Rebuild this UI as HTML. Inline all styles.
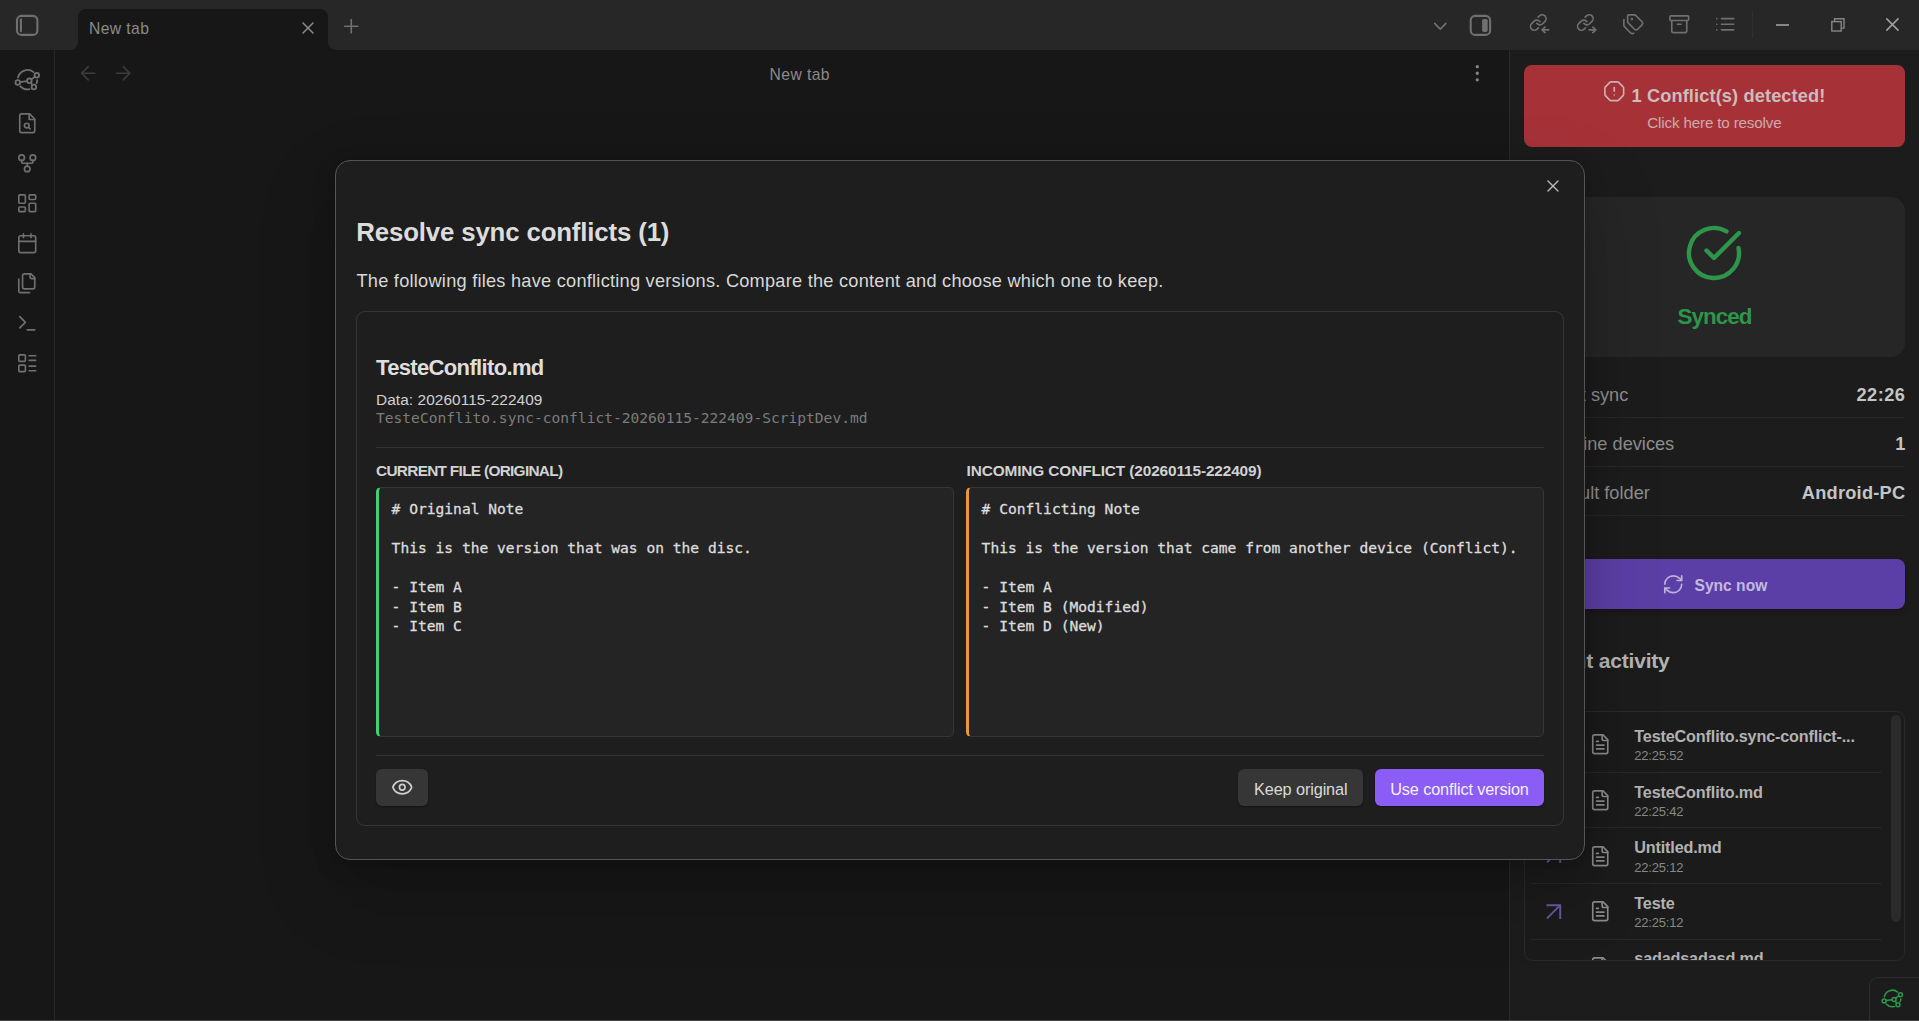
<!DOCTYPE html>
<html lang="en">
<head>
<meta charset="utf-8">
<title>Resolve sync conflicts</title>
<style>
*{box-sizing:border-box;margin:0;padding:0}
html,body{width:1919px;height:1021px;overflow:hidden;background:#171717}
body{position:relative;font-family:"Liberation Sans",sans-serif;color:#878787}
.abs{position:absolute}
.t{position:absolute;white-space:nowrap;line-height:1}
svg{position:absolute;overflow:visible}
.ic{fill:none;stroke:#707070;stroke-width:1.75;stroke-linecap:round;stroke-linejoin:round}
.mono{font-family:"DejaVu Sans Mono","Liberation Mono",monospace}
#titlebar{left:0;top:0;width:1919px;height:50px;background:#272727}
#tab{left:78px;top:9px;width:250px;height:41px;background:#171717;border-radius:8px 8px 0 0}
.curve{width:8px;height:8px;top:42px;background:#171717}
.curve i{position:absolute;left:0;top:0;width:8px;height:8px;background:#272727}
#ribbonline{left:54px;top:50px;width:1px;height:970px;background:#272727}
#rightbg{left:1509px;top:50px;width:410px;height:970px;background:#1c1c1c;border-left:1px solid #2a2a2a}
#bottomline{left:0;top:1020px;width:1919px;height:1px;background:#454545}
#banner{left:1524px;top:65px;width:381px;height:82px;background:#a63238;border-radius:8px}
#synccard{left:1524px;top:197px;width:381px;height:160px;background:#262626;border-radius:14px}
.row{left:1524px;width:381px;height:1px;background:#272727}
#syncbtn{left:1524px;top:559px;width:381px;height:50px;background:#5c3fa6;border-radius:8px;box-shadow:0 2px 5px rgba(0,0,0,.3)}
#actlist{left:1524px;top:711px;width:381px;height:250px;border:1px solid #2a2a2a;border-radius:9px;overflow:hidden;background:#1b1b1b}
#actlist .sep{position:absolute;left:6px;width:351px;height:1px;background:#272727}
#scroll{left:1891px;top:715px;width:10px;height:207px;border-radius:5px;background:#2a2a2a}
#status{left:1869px;top:977px;width:60px;height:50px;border:1px solid #2d2d2d;border-radius:9px 0 0 0;background:#1c1c1c}
#modal{left:335px;top:160px;width:1250px;height:700px;background:#1e1e1e;border:1px solid #555;border-radius:15px;
 box-shadow:0 2px 8px rgba(0,0,0,.07),0 7px 26px rgba(0,0,0,.11),0 30px 80px rgba(0,0,0,.2)}
#card{left:356px;top:311px;width:1208px;height:515px;border:1px solid #363636;border-radius:9px}
.hr{height:1px;background:#343434;left:376px;width:1168px}
.code{top:487px;width:578px;height:250px;background:#242424;border:1px solid #363636;border-left:3px solid #45d16f;border-radius:5px;overflow:hidden}
.code pre{position:absolute;left:12.6px;top:11.2px;font-family:"DejaVu Sans Mono","Liberation Mono",monospace;font-size:14.6px;line-height:19.5px;color:#dcdcdc;-webkit-text-stroke:0.3px #dcdcdc}
.btn{top:769px;height:37px;border-radius:6px;box-shadow:0 1px 2px rgba(0,0,0,.35)}
</style>
</head>
<body>
<div id="titlebar" class="abs"></div>
<div id="tab" class="abs"></div>
<div class="abs curve" style="left:70px"><i style="border-radius:0 0 8px 0"></i></div>
<div class="abs curve" style="left:328px"><i style="border-radius:0 0 0 8px"></i></div>
<svg class="ic" viewBox="0 0 40 40" style="left:7px;top:5px;width:40px;height:40px;stroke-width:2.1"><rect x="10" y="10.9" width="20.4" height="19" rx="4.5"/><path d="M13.9 14.5v11.8"/></svg>
<div class="t" style="top:21.01px;font-size:15.7px;color:#8a8a8a;left:89.00px;letter-spacing:0.4px;">New tab</div>
<svg class="ic" viewBox="0 0 24 24" style="left:297.80px;top:18.10px;width:20px;height:20px;stroke:#8c8c8c;stroke-width:1.75;"><path d="M18 6 6 18"/><path d="m6 6 12 12"/></svg>
<svg class="ic" viewBox="0 0 24 24" style="left:339.75px;top:15.05px;width:22.5px;height:22.5px;stroke:#707070;stroke-width:1.75;"><path d="M5 12h14"/><path d="M12 5v14"/></svg>
<svg class="ic" viewBox="0 0 24 24" style="left:1429.15px;top:14.95px;width:22.5px;height:22.5px;stroke:#707070;stroke-width:1.75;"><path d="m6 9 6 6 6-6"/></svg>
<svg class="ic" viewBox="0 0 40 40" style="left:1460px;top:5px;width:40px;height:40px;stroke-width:2.1"><rect x="10.7" y="10.9" width="19.4" height="19" rx="4.5"/><rect x="22.1" y="13.9" width="5.6" height="13" rx="1.6" fill="#707070" stroke="none"/></svg>
<svg class="ic" viewBox="0 0 24 24" style="left:1530.15px;top:12.95px;width:22.5px;height:22.5px;stroke:#707070;stroke-width:1.75;"><g transform="translate(0.5 1.8) scale(0.835) translate(-2 -2)" stroke-width="2.1"><path d="M10 13a5 5 0 0 0 7.54.54l3-3a5 5 0 0 0-7.07-7.07l-1.72 1.71"/><path d="M14 11a5 5 0 0 0-7.54-.54l-3 3a5 5 0 0 0 7.07 7.07l1.71-1.71"/></g><path d="M20 18h-7"/><path d="m16 21-3-3 3-3"/></svg>
<svg class="ic" viewBox="0 0 24 24" style="left:1576.15px;top:12.95px;width:22.5px;height:22.5px;stroke:#707070;stroke-width:1.75;"><g transform="translate(1.6 1.8) scale(0.835) translate(-2 -2)" stroke-width="2.1"><path d="M10 13a5 5 0 0 0 7.54.54l3-3a5 5 0 0 0-7.07-7.07l-1.72 1.71"/><path d="M14 11a5 5 0 0 0-7.54-.54l-3 3a5 5 0 0 0 7.07 7.07l1.71-1.71"/></g><path d="M14 18h7"/><path d="m18 15 3 3-3 3"/></svg>
<svg class="ic" viewBox="0 0 24 24" style="left:1622.15px;top:12.95px;width:22.5px;height:22.5px;stroke:#707070;stroke-width:1.75;"><path d="M13.172 2a2 2 0 0 1 1.414.586l6.71 6.71a2.4 2.4 0 0 1 0 3.408l-4.592 4.592a2.4 2.4 0 0 1-3.408 0l-6.71-6.71A2 2 0 0 1 6 9.172V3a1 1 0 0 1 1-1z"/><path d="M2 7v6.172a2 2 0 0 0 .586 1.414l6.71 6.71a2.4 2.4 0 0 0 3.191.193"/><circle cx="10.5" cy="6.5" r=".5" fill="#707070"/></svg>
<svg class="ic" viewBox="0 0 24 24" style="left:1668.15px;top:12.95px;width:22.5px;height:22.5px;stroke:#707070;stroke-width:1.75;"><rect width="20" height="5" x="2" y="3" rx="1"/><path d="M4 8v11a2 2 0 0 0 2 2h12a2 2 0 0 0 2-2V8"/><path d="M10 12h4"/></svg>
<svg class="ic" viewBox="0 0 24 24" style="left:1714.15px;top:12.95px;width:22.5px;height:22.5px;stroke:#707070;stroke-width:1.75;"><path d="M3 12h.01"/><path d="M3 18h.01"/><path d="M3 6h.01"/><path d="M8 12h13"/><path d="M8 18h13"/><path d="M8 6h13"/></svg>
<div class="abs" style="left:1752px;top:11px;width:1px;height:27px;background:#313131"></div>
<svg viewBox="0 0 60 50" style="left:1752px;top:0;width:60px;height:50px"><path d="M24 25h13" stroke="#8c8c8c" stroke-width="1.9" fill="none"/></svg>
<svg viewBox="0 0 60 50" style="left:1807px;top:0;width:60px;height:50px" fill="none" stroke="#868686" stroke-width="1.4"><path d="M27.6 21V18.7h9.4v9.4h-2.3"/><rect x="24.8" y="21.6" width="9.4" height="9.4"/></svg>
<svg viewBox="0 0 60 50" style="left:1862px;top:0;width:60px;height:50px" fill="none" stroke="#a0a0a0" stroke-width="1.5"><path d="M24.3 18.4 36.5 30.6M36.5 18.4 24.3 30.6"/></svg>
<div id="ribbonline" class="abs"></div>
<svg class="ic" viewBox="0 0 60 120" style="left:0;top:0;width:60px;height:120px;stroke-width:1.8"><path d="M18.01 77.68A9.7 9.7 0 0 1 33.60 72.16"/><path d="M37.19 80.21A9.7 9.7 0 0 1 36.56 83.18"/><path d="M29.68 89.15A9.7 9.7 0 0 1 20.41 86.32"/><path d="M20.17 82.15L27.03 81.15"/><path d="M31.33 79.37L34.87 76.73"/><path d="M30.81 82.74L32.49 85.06"/><circle cx="17.8" cy="82.5" r="2.3"/><circle cx="29.4" cy="80.8" r="2.3"/><circle cx="36.8" cy="75.3" r="2.3"/><circle cx="33.9" cy="87.0" r="2.3"/></svg>
<svg class="ic" viewBox="0 0 24 24" style="left:16.05px;top:112.05px;width:22.5px;height:22.5px;stroke:#707070;stroke-width:1.75;"><path d="M14.5 2H6a2 2 0 0 0-2 2v16a2 2 0 0 0 2 2h12a2 2 0 0 0 2-2V7.5L14.5 2z"/><polyline points="14 2 14 8 20 8"/><circle cx="11.5" cy="14.5" r="2.5"/><path d="M13.25 16.25 15 18"/></svg>
<svg class="ic" viewBox="0 0 24 24" style="left:16.05px;top:152.05px;width:22.5px;height:22.5px;stroke:#707070;stroke-width:1.75;"><circle cx="12" cy="18" r="3"/><circle cx="6" cy="6" r="3"/><circle cx="18" cy="6" r="3"/><path d="M18 9v2c0 .6-.4 1-1 1H7c-.6 0-1-.4-1-1V9"/><path d="M12 12v3"/></svg>
<svg class="ic" viewBox="0 0 24 24" style="left:16.05px;top:192.05px;width:22.5px;height:22.5px;stroke:#707070;stroke-width:1.75;"><rect width="7" height="9" x="3" y="3" rx="1"/><rect width="7" height="5" x="14" y="3" rx="1"/><rect width="7" height="9" x="14" y="12" rx="1"/><rect width="7" height="5" x="3" y="16" rx="1"/></svg>
<svg class="ic" viewBox="0 0 24 24" style="left:16.05px;top:232.05px;width:22.5px;height:22.5px;stroke:#707070;stroke-width:1.75;"><path d="M8 2v4"/><path d="M16 2v4"/><rect width="18" height="18" x="3" y="4" rx="2"/><path d="M3 10h18"/></svg>
<svg class="ic" viewBox="0 0 24 24" style="left:16.05px;top:272.05px;width:22.5px;height:22.5px;stroke:#707070;stroke-width:1.75;"><path d="M20 7h-3a2 2 0 0 1-2-2V2"/><path d="M9 18a2 2 0 0 1-2-2V4a2 2 0 0 1 2-2h7l4 4v10a2 2 0 0 1-2 2Z"/><path d="M3 7.6v12.8A1.6 1.6 0 0 0 4.6 22h9.8"/></svg>
<svg class="ic" viewBox="0 0 24 24" style="left:16.05px;top:312.05px;width:22.5px;height:22.5px;stroke:#707070;stroke-width:1.75;"><polyline points="4 17 10 11 4 5"/><line x1="12" x2="20" y1="19" y2="19"/></svg>
<svg class="ic" viewBox="0 0 24 24" style="left:16.05px;top:352.05px;width:22.5px;height:22.5px;stroke:#707070;stroke-width:1.75;"><rect width="7" height="7" x="3" y="3" rx="1"/><rect width="7" height="7" x="3" y="14" rx="1"/><path d="M14 4h7"/><path d="M14 9h7"/><path d="M14 15h7"/><path d="M14 20h7"/></svg>
<svg class="ic" viewBox="0 0 24 24" style="left:76.75px;top:61.75px;width:22.5px;height:22.5px;stroke:#3c3c3c;stroke-width:1.75;"><path d="m12 19-7-7 7-7"/><path d="M19 12H5"/></svg>
<svg class="ic" viewBox="0 0 24 24" style="left:111.55px;top:61.75px;width:22.5px;height:22.5px;stroke:#3c3c3c;stroke-width:1.75;"><path d="M5 12h14"/><path d="m12 5 7 7-7 7"/></svg>
<div class="t" style="top:67.41px;font-size:15.7px;color:#8a8a8a;left:769.60px;letter-spacing:0.4px;">New tab</div>
<svg class="ic" viewBox="0 0 24 24" style="left:1465.75px;top:61.75px;width:22.5px;height:22.5px;stroke:#868686;stroke-width:1.5;fill:#868686;"><circle cx="12" cy="12" r="1"/><circle cx="12" cy="5" r="1"/><circle cx="12" cy="19" r="1"/></svg>
<div id="rightbg" class="abs"></div>
<div id="banner" class="abs"></div>
<svg class="ic" viewBox="0 0 24 24" style="left:1603.15px;top:79.95px;width:22.5px;height:22.5px;stroke:#c9b2b4;stroke-width:1.75;"><path d="M12 16h.01"/><path d="M12 8v4"/><path d="M15.312 2a2 2 0 0 1 1.414.586l4.688 4.688A2 2 0 0 1 22 8.688v6.624a2 2 0 0 1-.586 1.414l-4.688 4.688a2 2 0 0 1-1.414.586H8.688a2 2 0 0 1-1.414-.586l-4.688-4.688A2 2 0 0 1 2 15.312V8.688a2 2 0 0 1 .586-1.414l4.688-4.688A2 2 0 0 1 8.688 2z"/></svg>
<div class="t" style="top:87.49px;font-size:18.2px;color:#cbbcbd;left:1631.50px;font-weight:700;letter-spacing:0.13px;">1 Conflict(s) detected!</div>
<div class="t" style="top:114.83px;font-size:15.2px;color:#cfa9ac;left:1647.30px;letter-spacing:-0.16px;">Click here to resolve</div>
<div id="synccard" class="abs"></div>
<svg class="ic" viewBox="0 0 24 24" style="left:1684.00px;top:223.00px;width:60px;height:60px;stroke:#2d964b;stroke-width:1.75;"><path d="M21.801 10A10 10 0 1 1 17 3.335"/><path d="m9 11 3 3L22 4"/></svg>
<div class="t" style="top:305.64px;font-size:22.4px;color:#2d964b;left:1214.50px;width:1000px;text-align:center;font-weight:700;letter-spacing:-0.9px;">Synced</div>
<div class="t" style="top:385.59px;font-size:18.2px;color:#8e8e8e;right:290.70px;">Last sync</div>
<div class="t" style="top:385.59px;font-size:18.2px;color:#c4c4c4;right:13.70px;font-weight:700;letter-spacing:0.45px;">22:26</div>
<div class="abs row" style="top:417px"></div>
<div class="t" style="top:434.59px;font-size:18.2px;color:#8e8e8e;right:244.80px;">Online devices</div>
<div class="t" style="top:434.59px;font-size:18.2px;color:#c4c4c4;right:13.70px;font-weight:700;">1</div>
<div class="abs row" style="top:466px"></div>
<div class="t" style="top:483.59px;font-size:18.2px;color:#8e8e8e;right:269.20px;">Default folder</div>
<div class="t" style="top:483.59px;font-size:18.2px;color:#c4c4c4;right:13.70px;font-weight:700;letter-spacing:0.25px;">Android-PC</div>
<div class="abs row" style="top:515px"></div>
<div id="syncbtn" class="abs"></div>
<svg class="ic" viewBox="0 0 24 24" style="left:1661.75px;top:573.25px;width:22.5px;height:22.5px;stroke:#bdb3dc;stroke-width:1.75;"><path d="M3 12a9 9 0 0 1 9-9 9.75 9.75 0 0 1 6.74 2.74L21 8"/><path d="M21 3v5h-5"/><path d="M21 12a9 9 0 0 1-9 9 9.75 9.75 0 0 1-6.74-2.74L3 16"/><path d="M8 16H3v5"/></svg>
<div class="t" style="top:577.79px;font-size:15.6px;color:#c3b9e0;left:1694.50px;font-weight:700;">Sync now</div>
<div class="t" style="top:650.22px;font-size:21px;color:#b4b4b4;right:249.40px;font-weight:700;letter-spacing:-0.18px;">Recent activity</div>
<div id="actlist" class="abs">
<svg class="ic" viewBox="0 0 24 24" style="left:64.25px;top:21.25px;width:22.5px;height:22.5px;stroke:#8a8a8a"><path d="M15 2H6a2 2 0 0 0-2 2v16a2 2 0 0 0 2 2h12a2 2 0 0 0 2-2V7Z"/><path d="M14 2v4a2 2 0 0 0 2 2h4"/><path d="M10 9H8"/><path d="M16 13H8"/><path d="M16 17H8"/></svg>
<div class="t" style="left:109.3px;top:15.89px;font-size:16.2px;font-weight:700;letter-spacing:-0.16px;color:#b2b2b2">TesteConflito.sync-conflict-...</div>
<div class="t" style="left:109.3px;top:37.40px;font-size:13.0px;letter-spacing:-0.2px;color:#878787">22:25:52</div>
<div class="sep" style="top:59.75px"></div>
<svg class="ic" viewBox="0 0 24 24" style="left:64.25px;top:76.90px;width:22.5px;height:22.5px;stroke:#8a8a8a"><path d="M15 2H6a2 2 0 0 0-2 2v16a2 2 0 0 0 2 2h12a2 2 0 0 0 2-2V7Z"/><path d="M14 2v4a2 2 0 0 0 2 2h4"/><path d="M10 9H8"/><path d="M16 13H8"/><path d="M16 17H8"/></svg>
<div class="t" style="left:109.3px;top:71.54px;font-size:16.2px;font-weight:700;letter-spacing:-0.16px;color:#b2b2b2">TesteConflito.md</div>
<div class="t" style="left:109.3px;top:93.05px;font-size:13.0px;letter-spacing:-0.2px;color:#878787">22:25:42</div>
<div class="sep" style="top:115.40px"></div>
<svg viewBox="0 0 16 16" style="left:20.90px;top:136.40px;width:16px;height:16px" fill="none" stroke="#6b58a0" stroke-width="1.9"><path d="M0.5 1.2H14.2V15"/><path d="M14.2 1.2 1 14.4"/></svg>
<svg class="ic" viewBox="0 0 24 24" style="left:64.25px;top:132.55px;width:22.5px;height:22.5px;stroke:#8a8a8a"><path d="M15 2H6a2 2 0 0 0-2 2v16a2 2 0 0 0 2 2h12a2 2 0 0 0 2-2V7Z"/><path d="M14 2v4a2 2 0 0 0 2 2h4"/><path d="M10 9H8"/><path d="M16 13H8"/><path d="M16 17H8"/></svg>
<div class="t" style="left:109.3px;top:127.19px;font-size:16.2px;font-weight:700;letter-spacing:-0.16px;color:#b2b2b2">Untitled.md</div>
<div class="t" style="left:109.3px;top:148.70px;font-size:13.0px;letter-spacing:-0.2px;color:#878787">22:25:12</div>
<div class="sep" style="top:171.05px"></div>
<svg viewBox="0 0 16 16" style="left:20.90px;top:192.05px;width:16px;height:16px" fill="none" stroke="#6b58a0" stroke-width="1.9"><path d="M0.5 1.2H14.2V15"/><path d="M14.2 1.2 1 14.4"/></svg>
<svg class="ic" viewBox="0 0 24 24" style="left:64.25px;top:188.20px;width:22.5px;height:22.5px;stroke:#8a8a8a"><path d="M15 2H6a2 2 0 0 0-2 2v16a2 2 0 0 0 2 2h12a2 2 0 0 0 2-2V7Z"/><path d="M14 2v4a2 2 0 0 0 2 2h4"/><path d="M10 9H8"/><path d="M16 13H8"/><path d="M16 17H8"/></svg>
<div class="t" style="left:109.3px;top:182.84px;font-size:16.2px;font-weight:700;letter-spacing:-0.16px;color:#b2b2b2">Teste</div>
<div class="t" style="left:109.3px;top:204.35px;font-size:13.0px;letter-spacing:-0.2px;color:#878787">22:25:12</div>
<div class="sep" style="top:226.70px"></div>
<svg viewBox="0 0 16 16" style="left:20.90px;top:247.70px;width:16px;height:16px" fill="none" stroke="#6b58a0" stroke-width="1.9"><path d="M0.5 1.2H14.2V15"/><path d="M14.2 1.2 1 14.4"/></svg>
<svg class="ic" viewBox="0 0 24 24" style="left:64.25px;top:243.85px;width:22.5px;height:22.5px;stroke:#8a8a8a"><path d="M15 2H6a2 2 0 0 0-2 2v16a2 2 0 0 0 2 2h12a2 2 0 0 0 2-2V7Z"/><path d="M14 2v4a2 2 0 0 0 2 2h4"/><path d="M10 9H8"/><path d="M16 13H8"/><path d="M16 17H8"/></svg>
<div class="t" style="left:109.3px;top:238.49px;font-size:16.2px;font-weight:700;letter-spacing:-0.16px;color:#b2b2b2">sadadsadasd.md</div>
<div class="t" style="left:109.3px;top:260.00px;font-size:13.0px;letter-spacing:-0.2px;color:#878787">22:25:02</div>
</div>
<div id="scroll" class="abs"></div>
<div id="status" class="abs"></div>
<svg class="ic" viewBox="0 0 60 120" style="left:0;top:0;width:60px;height:120px;stroke:#2d964b;stroke-width:1.8;transform-origin:27.35px 79.65px;transform:translate(1865.0px,918.8000000000001px) scale(0.857)"><path d="M18.01 77.68A9.7 9.7 0 0 1 33.60 72.16"/><path d="M37.19 80.21A9.7 9.7 0 0 1 36.56 83.18"/><path d="M29.68 89.15A9.7 9.7 0 0 1 20.41 86.32"/><path d="M20.17 82.15L27.03 81.15"/><path d="M31.33 79.37L34.87 76.73"/><path d="M30.81 82.74L32.49 85.06"/><circle cx="17.8" cy="82.5" r="2.3"/><circle cx="29.4" cy="80.8" r="2.3"/><circle cx="36.8" cy="75.3" r="2.3"/><circle cx="33.9" cy="87.0" r="2.3"/></svg>
<div id="modal" class="abs"></div>
<svg class="ic" viewBox="0 0 24 24" style="left:1543.00px;top:175.70px;width:20px;height:20px;stroke:#b8b8b8;stroke-width:1.6;"><path d="M18 6 6 18"/><path d="m6 6 12 12"/></svg>
<div class="t" style="top:219.86px;font-size:25.8px;color:#dcdcdc;left:356.30px;font-weight:700;letter-spacing:-0.148px;">Resolve sync conflicts (1)</div>
<div class="t" style="top:271.59px;font-size:18.2px;color:#d8d8d8;left:356.50px;letter-spacing:0.245px;">The following files have conflicting versions. Compare the content and choose which one to keep.</div>
<div id="card" class="abs"></div>
<div class="t" style="top:356.68px;font-size:22.0px;color:#dedede;left:376.00px;font-weight:700;letter-spacing:-0.65px;">TesteConflito.md</div>
<div class="t" style="top:391.96px;font-size:15.4px;color:#d2d2d2;left:376.00px;letter-spacing:0.077px;">Data: 20260115-222409</div>
<div class="t mono" style="top:411.17px;font-size:14.58px;color:#7c7c7c;left:376.00px;">TesteConflito.sync-conflict-20260115-222409-ScriptDev.md</div>
<div class="abs hr" style="top:447px"></div>
<div class="t" style="top:462.96px;font-size:15.4px;color:#d2d2d2;left:376.00px;font-weight:700;letter-spacing:-0.706px;">CURRENT FILE (ORIGINAL)</div>
<div class="t" style="top:462.96px;font-size:15.4px;color:#d2d2d2;left:966.50px;font-weight:700;letter-spacing:-0.125px;">INCOMING CONFLICT (20260115-222409)</div>
<div class="abs code" style="left:376px"><pre># Original Note

This is the version that was on the disc.

- Item A
- Item B
- Item C</pre></div>
<div class="abs code" style="left:966px;border-left-color:#e8973f"><pre># Conflicting Note

This is the version that came from another device (Conflict).

- Item A
- Item B (Modified)
- Item D (New)</pre></div>
<div class="abs hr" style="top:755px"></div>
<div class="abs btn" style="left:376px;width:52px;background:#363636"></div>
<svg class="ic" viewBox="0 0 24 24" style="left:390.75px;top:776.05px;width:22.5px;height:22.5px;stroke:#d0d0d0;stroke-width:1.75;"><path d="M2.062 12.348a1 1 0 0 1 0-.696 10.75 10.75 0 0 1 19.876 0 1 1 0 0 1 0 .696 10.75 10.75 0 0 1-19.876 0"/><circle cx="12" cy="12" r="3"/></svg>
<div class="abs btn" style="left:1238px;width:125px;background:#363636"></div>
<div class="t" style="top:781.40px;font-size:16.3px;color:#dadada;left:1254.00px;letter-spacing:-0.119px;">Keep original</div>
<div class="abs btn" style="left:1375px;width:169px;background:#8b5cf6"></div>
<div class="t" style="top:781.40px;font-size:16.3px;color:#f4f1fe;left:1390.20px;letter-spacing:-0.129px;">Use conflict version</div>
<div id="bottomline" class="abs"></div>
</body>
</html>
